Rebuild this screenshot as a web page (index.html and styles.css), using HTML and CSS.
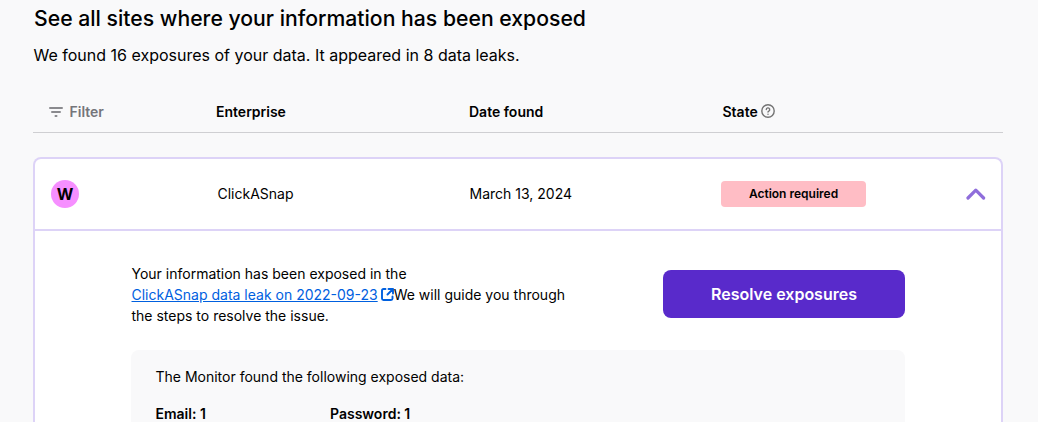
FILE: index.html
```
<!DOCTYPE html>
<html lang="en">
<head>
    <meta charset="UTF-8">
    <meta name="viewport" content="width=device-width, initial-scale=1.0">
    <title>Monitor</title>
    <link rel="stylesheet" href="styles.css">
</head>
<body>
    <main class="dashboard">
        <h1>See all sites where your information has been exposed</h1>
        <p class="summary">We found 16 exposures of your data. It appeared in 8 data leaks.</p>

        <!-- Table header -->
        <div class="row table-header">
            <div class="filter">
                <svg width="14" height="10" viewBox="0 0 14 10" fill="none" stroke="#8a8a8e" stroke-width="2" stroke-linecap="round">
                    <path d="M1 1h12M3 5h8M6.5 9h1"/>
                </svg>
                <span>Filter</span>
            </div>
            <div class="enterprise">Enterprise</div>
            <div class="date">Date found</div>
            <div class="state">
                <span>State</span>
                <svg class="help" width="14" height="14" viewBox="0 0 14 14" fill="none" stroke="#737373" stroke-width="1.4" stroke-linecap="round">
                    <circle cx="7" cy="7" r="6.2"/>
                    <path d="M5.3 5.6a1.7 1.7 0 1 1 2.5 1.5c-.6.3-.8.5-.8 1"/>
                    <path d="M7 10.1v.1"/>
                </svg>
            </div>
        </div>

        <!-- Exposure card -->
        <section class="card">
            <div class="row card-header">
                <div class="logo">W</div>
                <div class="enterprise">ClickASnap</div>
                <div class="date">March 13, 2024</div>
                <div class="state"><span class="pill">Action required</span></div>
                <svg class="chevron" width="20" height="12" viewBox="0 0 20 12" fill="none" stroke="#8f6ddb" stroke-width="3.2" stroke-linecap="round" stroke-linejoin="round">
                    <path d="M2 10l7.800-7.800L17.600 10"/>
                </svg>
            </div>

            <div class="card-body">
                <div class="intro">
                    <p>Your information has been exposed in the <br><a href="#">ClickASnap data leak on 2022-09-23</a><svg class="external" width="13" height="13" viewBox="0 0 13 13" fill="none" stroke="#0060df" stroke-width="1.9" stroke-linecap="round" stroke-linejoin="round"><path d="M4.5 1H2.5Q1 1 1 2.500V10.500Q1 12 2.500 12H10Q11.500 12 11.500 10.500V8.500M7.500 1H12V5.500M12 1L6.500 6.500"/></svg>We will guide you through the steps to resolve the issue.</p>
                    <button class="resolve">Resolve exposures</button>
                </div>

                <div class="exposed">
                    <p>The Monitor found the following exposed data:</p>
                    <div class="exposed-list">
                        <strong>Email: 1</strong>
                        <strong>Password: 1</strong>
                    </div>
                </div>
            </div>
        </section>
    </main>
</body>
</html>
```

FILE: styles.css
```
* {
    box-sizing: border-box;
}

body {
    margin: 0;
    background: #f9f9fa;
    color: #000;
    font-family: Inter, sans-serif;
    font-size: 14px;
}

.dashboard {
    width: 970px;
    height: 422px;
    margin-left: 33px;
}

h1 {
    margin: 0;
    padding: 3px 0 0 1px;
    font-size: 21.2px;
    font-weight: 500;
    line-height: 30px;
}

.summary {
    margin: 0;
    padding: 10px 0 0 0.5px;
    font-size: 16px;
    line-height: 24px;
}

/* Rows share the same columns */
.row {
    display: grid;
    grid-template-columns: 167px 253px 253.5px 1fr auto;
    align-items: center;
}

.table-header {
    height: 42px;
    margin-top: 24px;
    padding-left: 16px;
    border-bottom: 1px solid #cfcfd2;
    font-weight: 600;
}

.filter {
    display: flex;
    align-items: center;
    gap: 6.5px;
    color: #75757a;
}

.help {
    vertical-align: -1px;
}

/* Card */
.card {
    height: 265px;
    margin-top: 24px;
    background: #fff;
    border: 2px solid #ddd3f7;
    border-bottom: none;
    border-radius: 8px 8px 0 0;
}

.card-header {
    grid-template-columns: 166.5px 252px 251.5px 1fr auto;
    height: 72px;
    padding: 0 15px 0 16px;
    border-bottom: 2px solid #ddd3f7;
    line-height: 18px;
}

.logo {
    width: 28px;
    height: 28px;
    border-radius: 50%;
    background: #f68fff;
    font-size: 16px;
    font-weight: 700;
    line-height: 28px;
    text-align: center;
}

.pill {
    display: block;
    width: 145px;
    height: 26px;
    border-radius: 4px;
    background: #ffbdc5;
    font-size: 12px;
    font-weight: 600;
    line-height: 26px;
    text-align: center;
}

.card-body {
    width: 774px;
    margin: 0 auto;
    padding-top: 32px;
}

.intro {
    display: flex;
    justify-content: space-between;
    align-items: flex-start;
}

.intro p {
    width: 450px;
    margin: 0;
    padding-left: 0.5px;
    line-height: 21px;
}

.intro a {
    color: #0060df;
}

.external {
    margin-left: 3px;
    vertical-align: -1px;
}

.resolve {
    width: 242px;
    height: 48px;
    margin-top: 7px;
    padding: 0;
    border: none;
    border-radius: 8px;
    background: #592acb;
    color: #fff;
    font-family: inherit;
    font-size: 16px;
    font-weight: 600;
    cursor: pointer;
}

.exposed {
    height: 72px;
    margin-top: 24px;
    padding: 16px 24.5px 0;
    border-radius: 8px 8px 0 0;
    background: #f9f9fa;
}

.exposed p {
    margin: 0 0 18px;
    line-height: 21px;
}

.exposed-list {
    display: grid;
    grid-template-columns: 174.5px 1fr;
    line-height: 17px;
}

.exposed-list strong {
    font-weight: 600;
}
```
